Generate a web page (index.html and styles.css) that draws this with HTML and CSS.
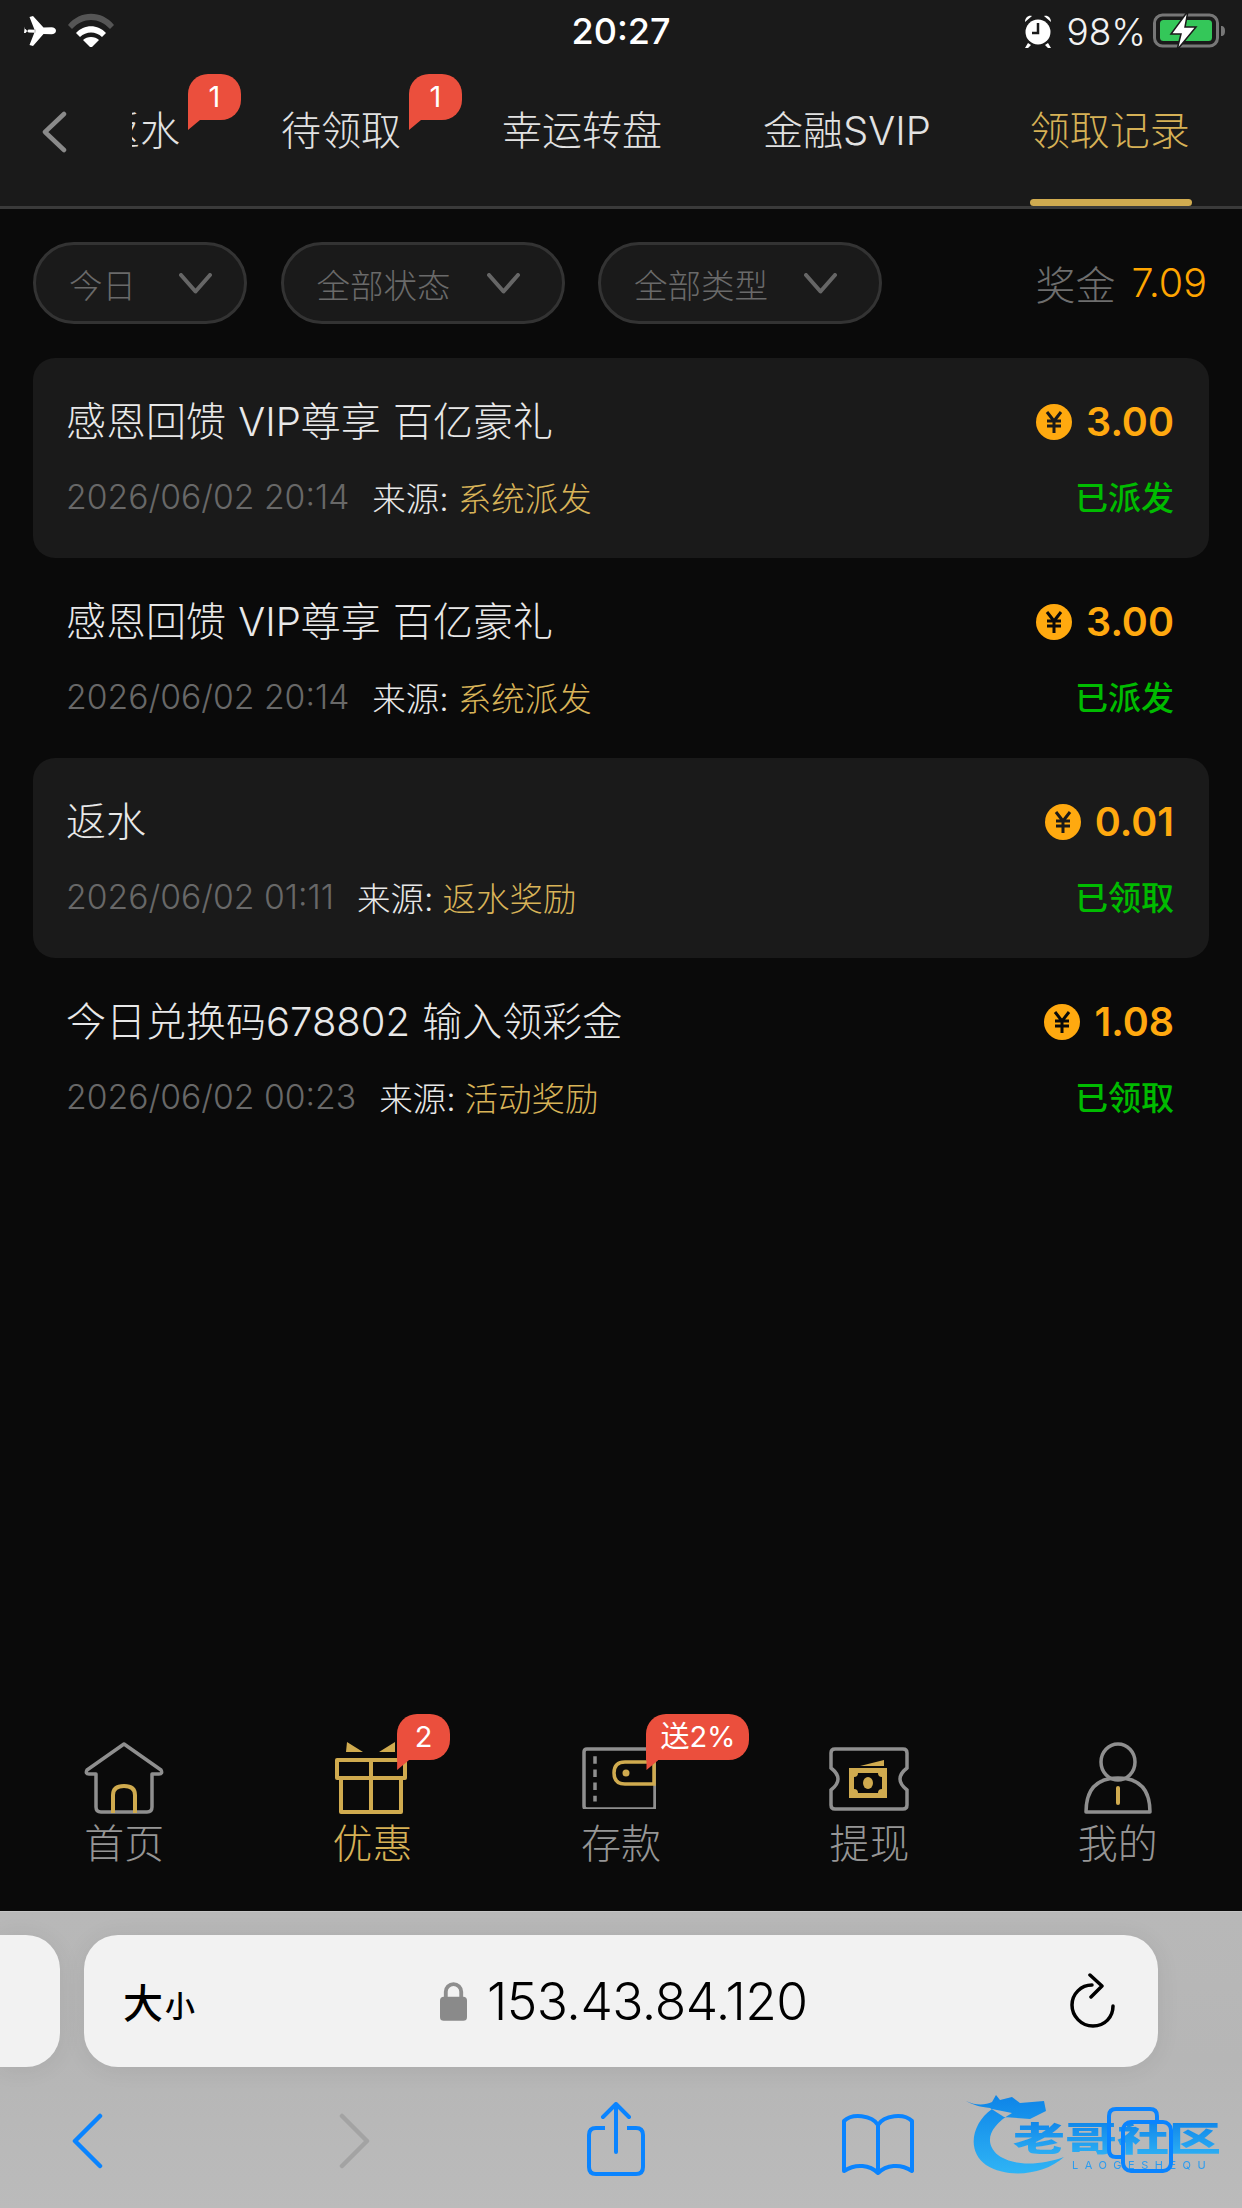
FILE: index.html
```html
<!DOCTYPE html>
<html lang="zh-CN">
<head>
<meta charset="utf-8">
<title>领取记录</title>
<link rel="stylesheet" href="styles.css">
</head>
<body>
<div class="app">
  <header class="top">
    <div class="status">
      <div class="status-side">
        <svg class="i-plane" viewBox="0 0 32 30"><path fill="#fff" d="M0 13h1.500l3 3.500 7-.3L5.500 1 9 0l10.500 11.500 8-.3c2.500 0 4.500 1.500 4.500 3.500s-2 3.500-4.500 3.500l-8-.3L9 30l-3.500-1 6-15.200-7-.3-3 3.500H0l.8-6.500z"/></svg>
        <svg class="i-wifi" viewBox="0 0 46 34"><path fill="#555" d="M0 12C12 -3 34 -3 46 12l-4 4C31 4 15 4 4 16z"/><path fill="#fff" d="M8 20c8-9 22-9 30 0l-4 4c-6-6-16-6-22 0z"/><path fill="#fff" d="M15 27c4-4 12-4 16 0l-8 8z"/></svg>
      </div>
      <div class="clock">20:27</div>
      <div class="status-side status-right">
        <svg class="i-alarm" viewBox="0 0 28 34"><circle cx="14" cy="18" r="12.500" fill="#fff"/><path d="M14 9v10h-6" fill="none" stroke="#1a1a1a" stroke-width="2.500"/><path fill="#fff" d="M1 8c0-4 3-7 7-6zM27 8c0-4-3-7-7-6zM4 29l-3 5h3l3-3zM24 29l3 5h-3l-3-3z"/></svg>
        <span class="pct">98%</span>
        <svg class="i-batt" viewBox="0 0 73 40"><rect x="1.500" y="4" width="63" height="31" rx="8" fill="none" stroke="#777" stroke-width="3"/><rect x="7" y="9" width="52" height="21" rx="3.500" fill="#34c759"/><path d="M68 15c3 0 4 2 4 5s-1 5-4 5z" fill="#777"/><path d="M35 0 18 23h10l-4 16 19-23H32z" fill="#fff" stroke="#1a1a1a" stroke-width="1.500"/></svg>
      </div>
    </div>
    <nav class="tabs">
      <svg class="i-back" viewBox="0 0 26 42"><path d="M23 3 4 21l19 18" fill="none" stroke="#8a8a8a" stroke-width="4.500" stroke-linecap="round" stroke-linejoin="round"/></svg>
      <div class="tab-viewport">
        <div class="tab-track">
          <span class="tab">返水<b class="bubble bubble-tab">1</b></span>
          <span class="tab">待领取<b class="bubble bubble-tab">1</b></span>
          <span class="tab">幸运转盘</span>
          <span class="tab">金融SVIP</span>
          <span class="tab tab-on">领取记录</span>
        </div>
      </div>
    </nav>
  </header>

  <main class="content">
    <section class="filters">
      <div class="pill pill-a"><span>今日</span><svg class="i-down" viewBox="0 0 33 21"><path d="M2 2l14.500 16.500L31 2" fill="none" stroke="#666" stroke-width="4" stroke-linecap="round" stroke-linejoin="round"/></svg></div>
      <div class="pill"><span>全部状态</span><svg class="i-down" viewBox="0 0 33 21"><path d="M2 2l14.500 16.500L31 2" fill="none" stroke="#666" stroke-width="4" stroke-linecap="round" stroke-linejoin="round"/></svg></div>
      <div class="pill"><span>全部类型</span><svg class="i-down" viewBox="0 0 33 21"><path d="M2 2l14.500 16.500L31 2" fill="none" stroke="#666" stroke-width="4" stroke-linecap="round" stroke-linejoin="round"/></svg></div>
      <div class="bonus"><span class="bonus-label">奖金</span><span class="bonus-value">7.09</span></div>
    </section>

    <section class="list">
      <article class="row row-card">
        <div class="line"><span class="title">感恩回馈 VIP尊享 百亿豪礼</span><span class="amount"><svg class="i-coin" viewBox="0 0 36 36"><circle cx="18" cy="18" r="18" fill="#ffa90f"/><path d="M11 8l7 9 7-9M11 17h14M11 22h14M18 17v12" fill="none" stroke="#1a1a1a" stroke-width="3"/></svg>3.00</span></div>
        <div class="line line-sub"><span class="date">2026/06/02 20:14</span><span class="src">来源:</span><span class="src-val">系统派发</span><span class="state">已派发</span></div>
      </article>
      <article class="row">
        <div class="line"><span class="title">感恩回馈 VIP尊享 百亿豪礼</span><span class="amount"><svg class="i-coin" viewBox="0 0 36 36"><circle cx="18" cy="18" r="18" fill="#ffa90f"/><path d="M11 8l7 9 7-9M11 17h14M11 22h14M18 17v12" fill="none" stroke="#0a0a0a" stroke-width="3"/></svg>3.00</span></div>
        <div class="line line-sub"><span class="date">2026/06/02 20:14</span><span class="src">来源:</span><span class="src-val">系统派发</span><span class="state">已派发</span></div>
      </article>
      <article class="row row-card">
        <div class="line"><span class="title">返水</span><span class="amount"><svg class="i-coin" viewBox="0 0 36 36"><circle cx="18" cy="18" r="18" fill="#ffa90f"/><path d="M11 8l7 9 7-9M11 17h14M11 22h14M18 17v12" fill="none" stroke="#1a1a1a" stroke-width="3"/></svg>0.01</span></div>
        <div class="line line-sub"><span class="date">2026/06/02 01:11</span><span class="src">来源:</span><span class="src-val">返水奖励</span><span class="state">已领取</span></div>
      </article>
      <article class="row">
        <div class="line"><span class="title">今日兑换码678802 输入领彩金</span><span class="amount"><svg class="i-coin" viewBox="0 0 36 36"><circle cx="18" cy="18" r="18" fill="#ffa90f"/><path d="M11 8l7 9 7-9M11 17h14M11 22h14M18 17v12" fill="none" stroke="#0a0a0a" stroke-width="3"/></svg>1.08</span></div>
        <div class="line line-sub"><span class="date">2026/06/02 00:23</span><span class="src">来源:</span><span class="src-val">活动奖励</span><span class="state">已领取</span></div>
      </article>
    </section>
  </main>

  <nav class="dock">
    <div class="dock-item">
      <span class="dock-icon">
        <svg viewBox="0 0 80 72" width="80" height="72"><path d="M12 32v33q0 5 5 5h46q5 0 5-5V32h7q4 0 2-4L40 2 3 28q-2 4 2 4z" fill="none" stroke="#8f8f8f" stroke-width="3.500" stroke-linejoin="round"/><path d="M29 71V53q0-9 11-9t11 9v18" fill="none" stroke="#d0ab4f" stroke-width="4"/></svg>
      </span>
      <span class="dock-label">首页</span>
    </div>
    <div class="dock-item dock-on">
      <span class="dock-icon icon-gift">
        <svg viewBox="0 0 72 72" width="72" height="72"><g fill="none" stroke="#d0ab4f" stroke-width="4" stroke-linejoin="round"><rect x="2" y="18" width="68" height="18"/><rect x="6" y="36" width="60" height="34"/><path d="M36 18v52"/></g><path fill="#d0ab4f" d="M12 0l16 10H11zM60 0L44 10h16z"/></svg>
        <b class="bubble bubble-gift">2</b>
      </span>
      <span class="dock-label">优惠</span>
    </div>
    <div class="dock-item">
      <span class="dock-icon icon-raised icon-wallet">
        <svg viewBox="0 0 74 62" width="74" height="62"><path d="M71 2H5Q2 2 2 5v54q0 3 3 3h66q2 0 2-3V2" fill="none" stroke="#8f8f8f" stroke-width="3.500"/><path d="M13 12v48" stroke="#8f8f8f" stroke-width="3.500" stroke-dasharray="8 6" fill="none" transform="translate(0 -2) scale(1 .94)"/><path d="M72 15H43q-11 0-11 11t11 11h29z" fill="none" stroke="#d0ab4f" stroke-width="3.500"/><circle cx="44" cy="26" r="3.500" fill="#d0ab4f"/></svg>
        <b class="bubble bubble-gift2">送2%</b>
      </span>
      <span class="dock-label">存款</span>
    </div>
    <div class="dock-item">
      <span class="dock-icon icon-raised">
        <svg viewBox="0 0 80 64" width="80" height="64"><path d="M6 2h68q4 0 4 4v15q-14 11 0 22v15q0 4-4 4H6q-4 0-4-4V43q14-11 0-22V6q0-4 4-4z" fill="none" stroke="#8f8f8f" stroke-width="3.500"/><path fill="#d0ab4f" d="M31 19l24-6v6z"/><path fill="#d0ab4f" fill-rule="evenodd" d="M20 21h38v30H20zm5 5v20h28V26z"/><path fill="#d0ab4f" d="M25 26h4q0 4-4 4zM53 26h-4q0 4 4 4zM25 46h4q0-4-4-4zM53 46h-4q0-4 4-4z"/><ellipse cx="39" cy="36" rx="5" ry="6" fill="#d0ab4f"/></svg>
      </span>
      <span class="dock-label">提现</span>
    </div>
    <div class="dock-item">
      <span class="dock-icon">
        <svg viewBox="0 0 68 72" width="68" height="72"><ellipse cx="34" cy="20" rx="17" ry="18" fill="none" stroke="#8f8f8f" stroke-width="3.500"/><path d="M2 70q0-34 32-34t32 34z" fill="none" stroke="#8f8f8f" stroke-width="3.500" stroke-linejoin="round"/><path d="M34 46v15" stroke="#d0ab4f" stroke-width="4" stroke-linecap="round"/></svg>
      </span>
      <span class="dock-label">我的</span>
    </div>
  </nav>

  <footer class="browser">
    <div class="url-row">
      <div class="url-prev"></div>
      <div class="url-bar">
        <span class="aa"><span class="aa-big">大</span><span class="aa-small">小</span></span>
        <span class="addr">
          <svg class="i-lock" viewBox="0 0 28 40"><path d="M6 18V10a8 8 0 0 1 16 0v8" fill="none" stroke="#8e8e8e" stroke-width="4"/><rect y="15" width="28" height="25" rx="4" fill="#8a8a8a"/></svg>
          <span class="addr-text">153.43.84.120</span>
        </span>
        <svg class="i-reload" viewBox="0 0 46 56"><path d="M23 12C12 12 3 21 3 32s9 21 21 21 20-9 20-20" fill="none" stroke="#000" stroke-width="3.500" stroke-linecap="round"/><path d="M21 2l12 11-11 11" fill="none" stroke="#000" stroke-width="3.500" stroke-linecap="round" stroke-linejoin="round"/></svg>
      </div>
    </div>
    <div class="tool-row">
      <svg class="i-nav" viewBox="0 0 32 56"><path d="M29 3 4 28l25 25" fill="none" stroke="#0a84ff" stroke-width="4.500" stroke-linecap="round" stroke-linejoin="round"/></svg>
      <svg class="i-nav i-forward" viewBox="0 0 32 56"><path d="M3 3l25 25L3 53" fill="none" stroke="#a3a3a3" stroke-width="4.500" stroke-linecap="round" stroke-linejoin="round"/></svg>
      <svg class="i-share" viewBox="0 0 58 74"><path d="M18 26H9q-7 0-7 7v32q0 7 7 7h40q7 0 7-7V33q0-7-7-7h-9" fill="none" stroke="#0a84ff" stroke-width="4"/><path d="M29 50V3M16 15 29 2l13 13" fill="none" stroke="#0a84ff" stroke-width="4" stroke-linecap="round" stroke-linejoin="round"/></svg>
      <svg class="i-book" viewBox="0 0 72 62"><path d="M36 12C30 2 10 0 2 8v50c12-8 26-6 34 2 8-8 22-10 34-2V8C62 0 42 2 36 12zv48" fill="none" stroke="#0a84ff" stroke-width="4" stroke-linejoin="round"/></svg>
      <span class="tabs-wrap">
        <span class="wm">
          <svg class="wm-dragon" viewBox="0 0 100 82"><defs><linearGradient id="wmg" x1="0" y1="0" x2="0" y2="1"><stop offset="0" stop-color="#0d84e8"/><stop offset="1" stop-color="#2fb4f5"/></linearGradient></defs><path fill="url(#wmg)" d="M26 16C6 30 0 58 20 72c22 14 58 10 78-8-22 8-50 10-66-2C18 50 22 34 46 20zM0 8c10 5 20 4 26 1l4-7 4 5 12-3 8 6 24-2 2 10-16 8-26-2-14-9C14 14 8 12 0 8z"/></svg>
          <span class="wm-text">老哥社区</span>
          <span class="wm-sub">LAOGESHEQU</span>
        </span>
        <svg class="i-tabs" viewBox="0 0 66 66"><path d="M15 50H9q-7 0-7-7V9q0-7 7-7h34q7 0 7 7v5" fill="none" stroke="#0a84ff" stroke-width="4"/><rect x="16" y="15" width="48" height="49" rx="8" fill="none" stroke="#0a84ff" stroke-width="4"/></svg>
      </span>
    </div>
  </footer>
</div>
</body>
</html>
```
FILE: styles.css
```css
* { box-sizing: border-box; }
html, body { margin: 0; padding: 0; background: #0a0a0a; }
body { font-family: Inter, "Noto Sans CJK SC", sans-serif; }
svg { display: block; flex: none; }

.app { width: 1242px; height: 2208px; display: flex; flex-direction: column; overflow: hidden; }

/* top */
.top { height: 209px; background: #1a1a1a; border-bottom: 3px solid #3a3a3a; }
.status { height: 62px; display: flex; align-items: center; justify-content: space-between; padding: 0 24px; }
.status-side { width: 300px; display: flex; align-items: center; gap: 12px; }
.status-right { justify-content: flex-end; gap: 14px; width: 308px; margin-right: -8px; }
.i-plane { width: 32px; height: 30px; }
.i-wifi { width: 46px; height: 34px; margin-top: -2px; }
.clock { color: #fff; font-size: 36px; font-weight: 500; line-height: 62px; }
.i-alarm { width: 28px; height: 34px; margin-right: 0; }
.pct { color: #f2f2f2; font-size: 37px; font-weight: 300; margin-right: -7px; }
.i-batt { width: 73px; height: 40px; }

.tabs { height: 144px; display: flex; align-items: flex-start; padding-left: 41px; }
.i-back { width: 26px; height: 42px; margin-top: 49px; }
.tab-viewport { margin-left: 65px; flex: 1; clip-path: inset(-20px 0 -20px 0); }
.tab-track { display: flex; gap: 101px; margin-left: -32px; }
.tab { position: relative; color: #e2e2e2; font-size: 40px; line-height: 137px; height: 144px; white-space: nowrap; font-weight: 300; }
.tab-on { color: #d6b156; margin-left: -2px; }
.tab-on::after { content: ""; position: absolute; left: 0; right: -2px; bottom: 0; height: 7px; border-radius: 4px; background: #d0ab50; }

/* bubbles */
.bubble { position: absolute; height: 46px; min-width: 53px; padding: 0 10px; background: #eb4f3d; color: #fff; border-radius: 20px 20px 20px 0; font-size: 29px; font-weight: 400; line-height: 46px; text-align: center; }
.bubble::after { content: ""; position: absolute; left: 0; top: 46px; width: 12px; height: 10px; background: #eb4f3d; clip-path: polygon(0 0, 100% 0, 0 100%); }
.bubble-tab { left: calc(100% + 8px); top: 12px; }
.bubble-gift { left: 62px; top: -28px; }
.bubble-gift2 { left: 64px; top: -28px; width: 103px; padding: 0; white-space: nowrap; }

/* content */
.content { flex: 1; min-height: 0; padding: 33px 33px 0; }
.filters { height: 82px; display: flex; gap: 33.500px; align-items: stretch; }
.pill { height: 82px; width: 284px; padding: 0 42px 0 33px; background: #1a1a1a; border: 3px solid #333; border-radius: 41px; display: flex; align-items: center; justify-content: space-between; color: #6a6a6a; font-size: 33.500px; font-weight: 300; }
.pill-a { width: 214px; padding-right: 32px; }
.i-down { width: 33px; height: 21px; }
.bonus { flex: 1; display: flex; align-items: center; justify-content: flex-end; padding-right: 2px; }
.bonus-label { color: #6e6e6e; font-size: 40px; font-weight: 300; margin-right: 16px; }
.bonus-value { color: #ffa500; font-size: 39.500px; font-weight: 300; }

.list { margin-top: 34px; display: flex; flex-direction: column; }
.row { height: 200px; padding: 31px 35px 0 33px; border-radius: 22px; display: flex; flex-direction: column; gap: 22px; }
.row-card { background: #1a1a1a; }
.line { display: flex; align-items: center; height: 60px; }
.line-sub { height: 50px; }
.title { flex: 1; color: #e8e8e8; font-size: 40px; font-weight: 300; white-space: nowrap; word-spacing: 1px; }
.amount { display: flex; align-items: center; color: #ffa90f; font-size: 39.500px; font-weight: 600; gap: 14px; margin-top: 5px; }
.i-coin { width: 36px; height: 36px; }
.date { color: #686868; font-size: 33.700px; font-weight: 300; margin-right: 23px; white-space: nowrap; }
.src { color: #e8e8e8; font-size: 33.500px; font-weight: 300; margin-right: 9px; }
.src-val { color: #d8b358; font-size: 33.500px; font-weight: 300; flex: 1; }
.state { color: #00bb00; font-size: 33px; font-weight: 500; }

/* dock */
.dock { height: 180px; display: grid; grid-template-columns: repeat(5, 1fr); background: #0a0a0a; padding-top: 11px; }
.dock-item { display: flex; flex-direction: column; align-items: center; color: #969696; }
.dock-on { color: #d6b156; }
.dock-icon { position: relative; height: 72px; display: flex; align-items: flex-end; justify-content: center; }
.icon-gift { margin-left: -3px; }
.icon-raised { align-items: flex-start; padding-top: 5px; }
.icon-wallet { margin-left: -3px; }
.dock-label { font-size: 40px; font-weight: 300; line-height: 56px; margin-top: 2px; }

/* browser */
.browser { height: 297px; border-top: 1px solid #c4c4c4; background: linear-gradient(#b8b8b8, #b6b6b6 50%, #bbb); }
.url-row { margin-top: 23px; height: 132px; display: flex; gap: 24px; }
.url-prev { width: 60px; height: 132px; background: #f2f2f2; border-radius: 0 34px 34px 0; box-shadow: 0 2px 24px rgba(0,0,0,.07); }
.url-bar { width: 1074px; height: 132px; background: #f2f2f2; border-radius: 34px; box-shadow: 0 2px 24px rgba(0,0,0,.07); display: flex; align-items: center; padding: 0 43px 0 39px; color: #000; }
.aa { width: 120px; display: flex; align-items: center; gap: 2px; margin-right: 197px; font-weight: 500; }
.aa-big { font-size: 40px; }
.aa-small { font-size: 30px; padding-top: 6px; }
.addr { display: flex; align-items: center; gap: 20px; flex: 1; }
.i-lock { width: 27px; height: 39px; }
.addr-text { font-size: 51.500px; font-weight: 300; color: #000; letter-spacing: -.5px; }
.i-reload { width: 46px; height: 56px; }

.tool-row { height: 141px; display: flex; align-items: flex-start; padding: 43px 0 0 71px; }
.i-nav { width: 32px; height: 56px; margin-top: 3px; }
.i-forward { margin-left: 236px; }
.i-share { width: 58px; height: 74px; margin-left: 216px; margin-top: -8px; }
.i-book { width: 72px; height: 62px; margin-left: 197px; margin-top: 3px; }
.tabs-wrap { position: relative; width: 66px; height: 66px; margin-left: 193px; margin-top: -3px; }
.i-tabs { position: relative; width: 66px; height: 66px; }
.wm { position: absolute; left: -141px; top: -14px; width: 256px; height: 82px; filter: blur(.7px); }
.wm-dragon { position: absolute; left: 0; top: 0; width: 100px; height: 82px; }
.wm-text { position: absolute; left: 47px; top: 29px; font-size: 34px; line-height: 34px; font-weight: 900; white-space: nowrap; transform: scaleX(1.53); transform-origin: left center; background: linear-gradient(#1187ea, #2db0f4); -webkit-background-clip: text; background-clip: text; color: transparent; }
.wm-sub { position: absolute; left: 106px; top: 66px; font-size: 11px; line-height: 12px; letter-spacing: 6.500px; color: #2b9cf0; font-weight: 400; white-space: nowrap; }
```
